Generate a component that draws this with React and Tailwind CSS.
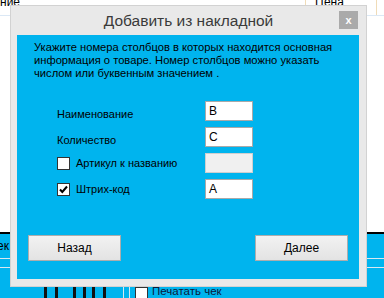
import React from "react";

const font = { fontFamily: '"Liberation Sans", Arial, sans-serif' };

function Check({ checked }) {
    return (
        <span className="w-[13px] h-[13px] border border-[#333] bg-white flex items-center justify-center shrink-0">
            {checked && (
                <svg width="9" height="9" viewBox="0 0 9 9">
                    <path d="M1 4.5 L3.3 7 L8 1.5" stroke="#000" strokeWidth="2" fill="none" />
                </svg>
            )}
        </span>
    );
}

function Field({ value, disabled }) {
    return (
        <div
            className={
                "w-[48px] h-[20px] border text-[12px] leading-[18px] pl-[3px] text-black " +
                (disabled ? "bg-[#f0f0f0] border-[#cfcfcf]" : "bg-white border-[#a9a9a9]")
            }
        >
            {value}
        </div>
    );
}

export default function App() {
    const rows = [
        { label: "Наименование", value: "B" },
        { label: "Количество", value: "C" },
        { label: "Артикул к названию", value: "", box: true, checked: false, disabled: true },
        { label: "Штрих-код", value: "A", box: true, checked: true },
    ];

    return (
        <div className="relative w-[384px] h-[298px] overflow-hidden bg-white" style={font}>
            {/* background window */}
            <div className="h-[232px] flex flex-col">
                <div className="h-[16px] flex text-[12px] leading-[8px] text-black border-b border-[#dbe8f5]">
                    <span className="w-[305px] -mt-[2px]">ние</span>
                    <span className="w-[72px] border-l border-r border-[#f0dcb8] pl-[9px] -mt-[2px]">Цена</span>
                </div>
            </div>
            <div className="h-[2px] bg-black" />
            <div className="h-[64px] bg-[#00b4ee] overflow-hidden">
                <div className="h-[24px] text-[12px] leading-[24px] text-black -ml-[3px]">ек</div>
                <div className="h-px bg-[#d8e8f0]" />
                <div className="h-[8px]" />
                <div className="h-px bg-[#d8e8f0]" />
                <div className="flex items-start pt-[18px] text-[11.5px] text-[#0a1a3a]">
                    <span className="ml-[44px] w-[3px] h-[20px] bg-[#111] shrink-0" />
                    <span className="ml-[8px] w-[3px] h-[20px] bg-[#111] shrink-0" />
                    <span className="ml-[15px] w-[3px] h-[20px] bg-[#111] shrink-0" />
                    <span className="ml-[7px] w-[3px] h-[20px] bg-[#111] shrink-0" />
                    <span className="ml-[6px] w-[3px] h-[20px] bg-[#111] shrink-0" />
                    <span className="ml-[8px] w-[3px] h-[20px] bg-[#111] shrink-0" />
                    <span className="ml-[17px] w-px h-[20px] bg-[#d8e8f0] shrink-0" />
                    <span className="ml-[5px] w-px h-[20px] bg-[#d8e8f0] shrink-0" />
                    <span className="ml-[5px] flex items-start gap-[4px] leading-[13px] whitespace-nowrap">
                        <span className="mt-[1px]">
                            <Check checked={false} />
                        </span>
                        <span className="-mt-[1px]">Печатать чек</span>
                    </span>
                </div>
            </div>

            {/* dialog */}
            <div className="absolute left-[10px] top-[5px] w-[357px] h-[282px] bg-[#e9e9e9] border border-[#d2d2d2] flex flex-col">
                <div className="relative h-[29px] shrink-0 flex items-center justify-center text-[15.5px] text-[#3a3a3a]">
                    Добавить из накладной
                    <div className="absolute right-[8px] top-[5px] w-[19px] h-[18px] bg-[#aaaaaa] flex items-center justify-center text-white text-[11px] font-bold leading-none">
                        x
                    </div>
                </div>
                <div className="ml-[6px] mr-[7px] h-[244px] shrink-0 bg-[#00b4ee] flex flex-col text-[11px] text-black">
                    <p className="pl-[17px] pt-[6px] leading-[13px] whitespace-nowrap text-[11.2px]">
                        Укажите номера столбцов в которых находится основная
                        <br />
                        информация о товаре. Номер столбцов можно указать
                        <br />
                        числом или буквенным значением .
                    </p>
                    <div className="mt-[21px] flex flex-col gap-[6px]">
                        {rows.map((r) => (
                            <div key={r.label} className="flex items-center h-[20px]">
                                <div className="w-[188px] pl-[40px] flex items-center">
                                    {r.box && <Check checked={r.checked} />}
                                    <span className={r.box ? "ml-[6px]" : "mt-[6px]"}>{r.label}</span>
                                </div>
                                <Field value={r.value} disabled={r.disabled} />
                            </div>
                        ))}
                    </div>
                    <div className="mt-[36px] px-[11px] flex justify-between">
                        <button className="w-[93px] h-[26px] border border-[#adadad] bg-gradient-to-b from-[#f2f2f2] to-[#e3e3e3] text-[12px]">
                            Назад
                        </button>
                        <button className="w-[93px] h-[26px] border border-[#adadad] bg-gradient-to-b from-[#f2f2f2] to-[#e3e3e3] text-[12px]">
                            Далее
                        </button>
                    </div>
                </div>
            </div>
        </div>
    );
}
